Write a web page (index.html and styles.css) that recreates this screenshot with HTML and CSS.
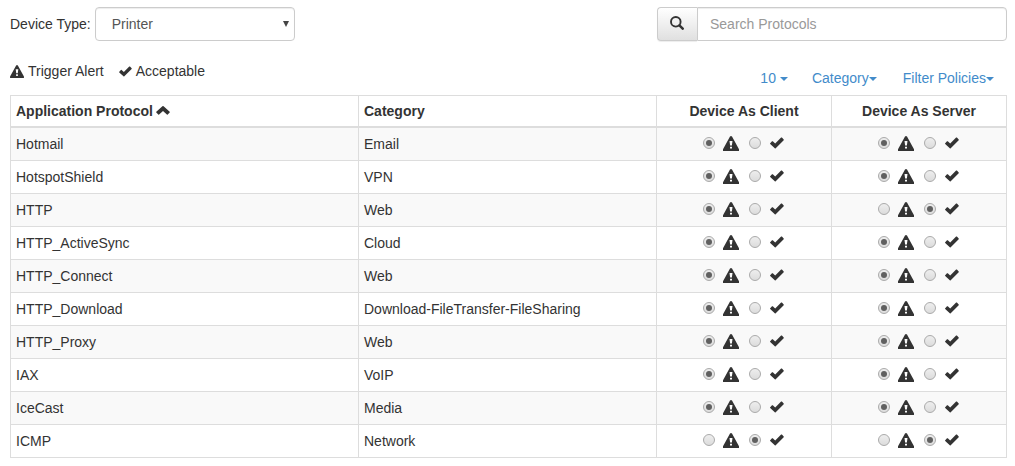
FILE: index.html
```html
<!DOCTYPE html>
<html lang="en">
<head>
<meta charset="utf-8">
<title>Device Protocols</title>
<link rel="stylesheet" href="styles.css">
</head>
<body>
<svg class="sprite" aria-hidden="true">
  <symbol id="alert" viewBox="0 0 16 15"><path fill-rule="evenodd" d="M7 .5Q8 -.5 9 .5L16 13.2V15H0V13.2ZM6.5 5L7.1 9.6H8.9L9.5 5ZM7 10.8V12.6H9V10.8Z"/></symbol>
  <symbol id="check" viewBox="0 0 14 12"><path d="M.2 6.3L2 4.3Q2.4 4 2.8 4.3L5.2 6.5L11.1 .6Q11.5 .3 11.9 .6L13.7 2.4Q14 2.8 13.7 3.2L5.7 11.3Q5.2 11.7 4.8 11.3L.2 7Q-.1 6.7 .2 6.3Z"/></symbol>
</svg>
<header class="toolbar">
  <div class="device"><span>Device Type:</span><div class="select"><span>Printer</span><svg class="select-arrow" viewBox="0 0 6 6"><path d="M0 0H6L3 6Z"/></svg></div></div>
  <div class="search"><button class="search-btn" aria-label="Search"><svg width="14" height="14" viewBox="0 0 14 14"><circle cx="5.8" cy="5.8" r="4.8" fill="none" stroke="#333" stroke-width="1.9"/><path d="M9.4 9.4L12.7 12.7" stroke="#333" stroke-width="2.5" stroke-linecap="round"/></svg></button><input class="search-input" type="text" placeholder="Search Protocols"></div>
</header>
<div class="subbar">
  <div class="legend"><svg class="legend-alert"><use href="#alert"/></svg><span>Trigger Alert</span><svg class="legend-check"><use href="#check"/></svg><span>Acceptable</span></div>
  <nav class="filters"><a class="count">10<i class="caret"></i></a><a>Category<i class="caret"></i></a><a>Filter Policies<i class="caret"></i></a></nav>
</div>
<table class="protocols">
  <colgroup><col class="col-name"><col class="col-category"><col class="col-choice"><col class="col-choice"></colgroup>
  <thead><tr><th>Application Protocol <svg class="sort" viewBox="0 0 14 9"><path d="M.3 5.7L6.4 .3Q7 -.2 7.6 .3L13.7 5.7Q14 6.1 13.7 6.5L11.7 8.6Q11.3 9 10.9 8.6L7 5.1L3.1 8.6Q2.7 9 2.3 8.6L.3 6.5Q0 6.1 .3 5.7Z"/></svg></th><th>Category</th><th class="center">Device As Client</th><th class="center">Device As Server</th></tr></thead>
  <tbody>
    <tr><td>Hotmail</td><td>Email</td>
      <td><div class="choice"><i class="radio on"></i><svg class="alert"><use href="#alert"/></svg><i class="radio"></i><svg class="check"><use href="#check"/></svg></div></td>
      <td><div class="choice"><i class="radio on"></i><svg class="alert"><use href="#alert"/></svg><i class="radio"></i><svg class="check"><use href="#check"/></svg></div></td></tr>
    <tr><td>HotspotShield</td><td>VPN</td>
      <td><div class="choice"><i class="radio on"></i><svg class="alert"><use href="#alert"/></svg><i class="radio"></i><svg class="check"><use href="#check"/></svg></div></td>
      <td><div class="choice"><i class="radio on"></i><svg class="alert"><use href="#alert"/></svg><i class="radio"></i><svg class="check"><use href="#check"/></svg></div></td></tr>
    <tr><td>HTTP</td><td>Web</td>
      <td><div class="choice"><i class="radio on"></i><svg class="alert"><use href="#alert"/></svg><i class="radio"></i><svg class="check"><use href="#check"/></svg></div></td>
      <td><div class="choice"><i class="radio"></i><svg class="alert"><use href="#alert"/></svg><i class="radio on"></i><svg class="check"><use href="#check"/></svg></div></td></tr>
    <tr><td>HTTP_ActiveSync</td><td>Cloud</td>
      <td><div class="choice"><i class="radio on"></i><svg class="alert"><use href="#alert"/></svg><i class="radio"></i><svg class="check"><use href="#check"/></svg></div></td>
      <td><div class="choice"><i class="radio on"></i><svg class="alert"><use href="#alert"/></svg><i class="radio"></i><svg class="check"><use href="#check"/></svg></div></td></tr>
    <tr><td>HTTP_Connect</td><td>Web</td>
      <td><div class="choice"><i class="radio on"></i><svg class="alert"><use href="#alert"/></svg><i class="radio"></i><svg class="check"><use href="#check"/></svg></div></td>
      <td><div class="choice"><i class="radio on"></i><svg class="alert"><use href="#alert"/></svg><i class="radio"></i><svg class="check"><use href="#check"/></svg></div></td></tr>
    <tr><td>HTTP_Download</td><td>Download-FileTransfer-FileSharing</td>
      <td><div class="choice"><i class="radio on"></i><svg class="alert"><use href="#alert"/></svg><i class="radio"></i><svg class="check"><use href="#check"/></svg></div></td>
      <td><div class="choice"><i class="radio on"></i><svg class="alert"><use href="#alert"/></svg><i class="radio"></i><svg class="check"><use href="#check"/></svg></div></td></tr>
    <tr><td>HTTP_Proxy</td><td>Web</td>
      <td><div class="choice"><i class="radio on"></i><svg class="alert"><use href="#alert"/></svg><i class="radio"></i><svg class="check"><use href="#check"/></svg></div></td>
      <td><div class="choice"><i class="radio on"></i><svg class="alert"><use href="#alert"/></svg><i class="radio"></i><svg class="check"><use href="#check"/></svg></div></td></tr>
    <tr><td>IAX</td><td>VoIP</td>
      <td><div class="choice"><i class="radio on"></i><svg class="alert"><use href="#alert"/></svg><i class="radio"></i><svg class="check"><use href="#check"/></svg></div></td>
      <td><div class="choice"><i class="radio on"></i><svg class="alert"><use href="#alert"/></svg><i class="radio"></i><svg class="check"><use href="#check"/></svg></div></td></tr>
    <tr><td>IceCast</td><td>Media</td>
      <td><div class="choice"><i class="radio on"></i><svg class="alert"><use href="#alert"/></svg><i class="radio"></i><svg class="check"><use href="#check"/></svg></div></td>
      <td><div class="choice"><i class="radio on"></i><svg class="alert"><use href="#alert"/></svg><i class="radio"></i><svg class="check"><use href="#check"/></svg></div></td></tr>
    <tr><td>ICMP</td><td>Network</td>
      <td><div class="choice"><i class="radio"></i><svg class="alert"><use href="#alert"/></svg><i class="radio on"></i><svg class="check"><use href="#check"/></svg></div></td>
      <td><div class="choice"><i class="radio"></i><svg class="alert"><use href="#alert"/></svg><i class="radio on"></i><svg class="check"><use href="#check"/></svg></div></td></tr>
  </tbody>
</table>
</body>
</html>
```
FILE: styles.css
```css
* { box-sizing: border-box; }
body { margin: 0; padding: 7px 8px 0 10px; background: #fff; color: #333; font: 14px/20px "Liberation Sans", Arial, sans-serif; overflow: hidden; }
svg { display: block; fill: #333; flex: none; }
.sprite { display: none; }
.toolbar { display: flex; justify-content: space-between; height: 34px; }
.device { display: flex; align-items: center; gap: 4px; }
.select { display: flex; align-items: center; justify-content: space-between; width: 200px; height: 34px; padding: 0 5px 0 16px; border: 1px solid #ccc; border-radius: 4px; color: #555; box-shadow: inset 0 1px 1px rgba(0,0,0,.075); }
.select-arrow { width: 6px; height: 6px; fill: #444; }
.search { display: flex; width: 350px; }
.search-btn { display: flex; align-items: center; justify-content: center; width: 40px; padding: 0 2px 2px 0; border: 1px solid #ccc; border-right: 0; border-radius: 4px 0 0 4px; background: linear-gradient(#fff, #e0e0e0); box-shadow: 0 1px 1px rgba(0,0,0,.075); }
.search-input { width: 310px; height: 34px; padding: 6px 12px; border: 1px solid #ccc; border-radius: 0 4px 4px 0; background: #fff; color: #555; font: inherit; box-shadow: inset 0 1px 1px rgba(0,0,0,.075); }
.search-input::placeholder { color: #999; opacity: 1; }
.subbar { display: flex; justify-content: space-between; height: 54px; padding-top: 20px; }
.legend { display: flex; align-items: center; height: 20px; }
.legend-alert { width: 14px; height: 13px; margin-right: 4px; }
.legend-check { width: 13px; height: 11px; margin: 0 4px 0 15px; }
.filters { display: flex; gap: 25px; padding: 7px 13px 0 0; color: #428bca; }
.filters a { display: flex; align-items: center; height: 20px; }
.caret { width: 0; height: 0; margin-top: 2px; border: 4px solid transparent; border-top-color: currentColor; border-bottom: 0; }
.count .caret { margin-left: 4px; }
.count { margin-right: -1px; }
.count + a { margin-right: 1px; }
.protocols { width: 997px; table-layout: fixed; border-spacing: 0; border: solid #ddd; border-width: 1px 0 0 1px; }
.col-name { width: 348px; }
.col-category { width: 298px; }
.col-choice { width: 175px; }
th, td { height: 33px; padding: 0 5px; border: solid #ddd; border-width: 0 1px 1px 0; text-align: left; vertical-align: middle; }
th { height: 32px; border-bottom-width: 2px; }
th.center { text-align: center; }
tbody tr:nth-child(odd) { background: #f9f9f9; }
.sort { display: inline-block; width: 14px; height: 9px; margin-left: -.5px; vertical-align: 1px; }
.choice { display: flex; align-items: center; justify-content: center; height: 20px; padding: 0 2px 2px 0; }
.radio { position: relative; width: 12px; height: 12px; border: 1px solid #aaa; border-radius: 50%; background: linear-gradient(#eee, #dcdcdc); }
.radio.on::after { content: ""; position: absolute; left: 2px; top: 2px; width: 6px; height: 6px; border-radius: 50%; background: #606060; }
.alert { width: 16px; height: 15px; margin: 0 10px 0 8px; }
.check { width: 14px; height: 12px; margin: 0 0 0 9px; }
```
